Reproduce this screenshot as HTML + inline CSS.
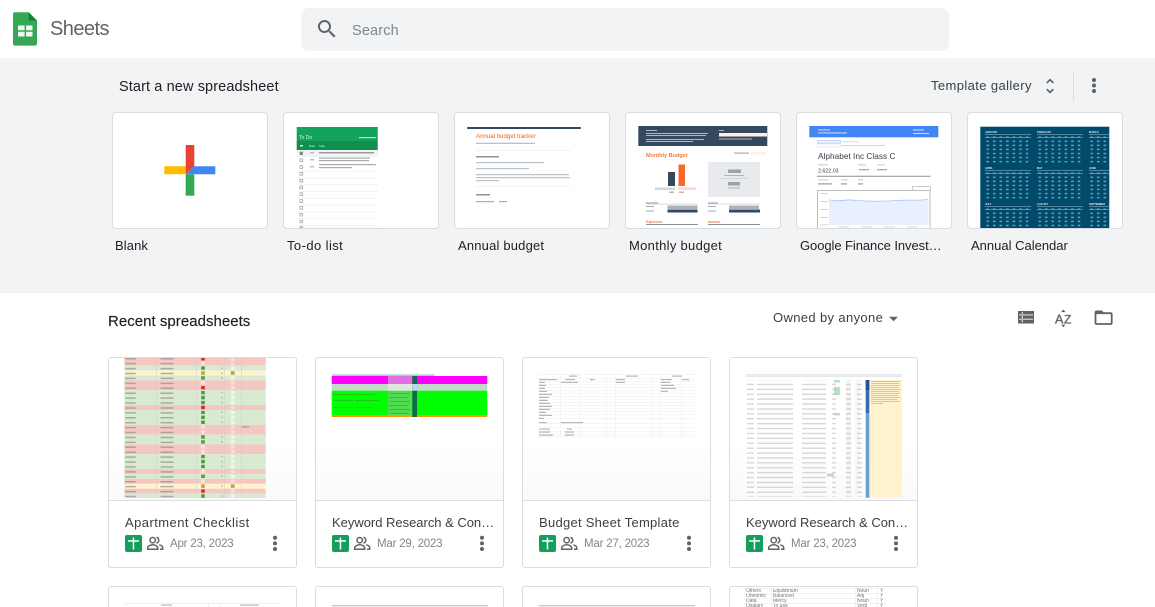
<!DOCTYPE html>
<html><head><meta charset="utf-8"><title>Sheets</title>
<style>
html,body{margin:0;padding:0;background:#fff;width:1155px;height:607px;overflow:hidden}
#root{width:1155px;height:607px;position:relative;overflow:hidden;font-family:"Liberation Sans",sans-serif}
.a{position:absolute;white-space:nowrap}
.tc{position:absolute;top:112px;width:154px;height:115px;background:#fff;border:1px solid #dadce0;border-radius:4px}
.tl{position:absolute;top:237px;font-size:13px;line-height:17px;color:#202124;letter-spacing:.1px;white-space:nowrap}
.c{position:absolute;width:187px;height:209px;background:#fff;border:1px solid #dadce0;border-radius:3px;overflow:hidden}
.c.b{height:20px;border-bottom:none;border-radius:3px 3px 0 0}
.c .fade{position:absolute;left:0;right:0;top:0;height:142px;border-bottom:1px solid #dadce0;background:linear-gradient(#fff 60%,#fafafa)}
.t{position:absolute;top:514px;font-size:13px;line-height:17px;color:#3c4043;white-space:nowrap}
.d{position:absolute;top:537px;font-size:11.5px;line-height:14px;color:#80868b;letter-spacing:-.2px;white-space:nowrap}
svg.top{position:absolute;left:0;top:0;overflow:hidden}
.soft{filter:blur(.3px)}
</style></head><body><div id="root">

<div class="a" style="left:0;top:58px;width:1155px;height:235px;background:#f1f3f4"></div>
<div class="a" style="left:301px;top:8px;width:648px;height:43px;background:#f1f3f4;border-radius:8px"></div>
<div class="a" style="left:50px;top:17px;font-size:20px;line-height:24px;color:#5f6368;letter-spacing:-.55px">Sheets</div>
<div class="a" style="left:352px;top:22px;font-size:14.5px;line-height:18px;color:#80868b;letter-spacing:.15px">Search</div>
<div class="a" style="left:119px;top:78px;font-size:14.5px;line-height:18px;color:#202124;letter-spacing:.11px">Start a new spreadsheet</div>
<div class="a" style="left:931px;top:77px;font-size:13px;line-height:17px;color:#3c4043;letter-spacing:.39px">Template gallery</div>
<div class="a" style="left:1073px;top:72px;width:1px;height:29px;background:#dadce0"></div>

<div class="tc" style="left:112px"></div>
<div class="tc" style="left:283px"></div>
<div class="tc" style="left:454px"></div>
<div class="tc" style="left:625px"></div>
<div class="tc" style="left:796px"></div>
<div class="tc" style="left:967px"></div>
<div class="tl" style="left:115px">Blank</div>
<div class="tl" style="left:287px;letter-spacing:.42px">To-do list</div>
<div class="tl" style="left:458px;letter-spacing:.18px">Annual budget</div>
<div class="tl" style="left:629px;letter-spacing:.3px">Monthly budget</div>
<div class="tl" style="left:800px;letter-spacing:-.07px">Google Finance Invest…</div>
<div class="tl" style="left:971px;letter-spacing:0">Annual Calendar</div>

<div class="a" style="left:108px;top:313px;font-size:15px;line-height:18px;color:#202124;letter-spacing:.03px;-webkit-text-stroke:.15px #202124">Recent spreadsheets</div>
<div class="a" style="left:773px;top:309px;font-size:13px;line-height:17px;color:#3c4043;letter-spacing:.36px">Owned by anyone</div>

<div class="c" style="left:108px;top:357px"><div class="fade"></div></div>
<div class="c" style="left:315px;top:357px"><div class="fade"></div></div>
<div class="c" style="left:522px;top:357px"><div class="fade"></div></div>
<div class="c" style="left:729px;top:357px"><div class="fade"></div></div>
<div class="c b" style="left:108px;top:586px"></div>
<div class="c b" style="left:315px;top:586px"></div>
<div class="c b" style="left:522px;top:586px"></div>
<div class="c b" style="left:729px;top:586px"></div>

<div class="t" style="left:125px;letter-spacing:.44px">Apartment Checklist</div>
<div class="t" style="left:332px;letter-spacing:-.02px">Keyword Research &amp; Con…</div>
<div class="t" style="left:539px;letter-spacing:.27px">Budget Sheet Template</div>
<div class="t" style="left:746px;letter-spacing:-.02px">Keyword Research &amp; Con…</div>
<div class="d" style="left:170px">Apr 23, 2023</div>
<div class="d" style="left:377px">Mar 29, 2023</div>
<div class="d" style="left:584px">Mar 27, 2023</div>
<div class="d" style="left:791px">Mar 23, 2023</div>

<svg class="top" width="1155" height="607" viewBox="0 0 1155 607" font-family="Liberation Sans, sans-serif">
<defs>
<g id="meta">
<rect x="0" y="0" width="17" height="17" rx="2" fill="#12a05c"/>
<rect x="3" y="5.200" width="11" height="1.500" fill="#fff"/><rect x="7.700" y="2.500" width="1.500" height="12" fill="#fff"/>
<g fill="none" stroke="#5f6368" stroke-width="1.500">
<circle cx="27.700" cy="5.200" r="2.700"/>
<path d="M22.700 14.300v-1.500c0-1.800 3-3 5-3s5 1.200 5 3v1.500z"/>
<path d="M31.500 2.400a3 3 0 0 1 0 5.800"/>
<path d="M34.300 9.800c2 .5 3.400 1.500 3.400 3v1.500h-2.700"/>
</g>
<circle cx="150" cy="2.800" r="2" fill="#5f6368"/><circle cx="150" cy="8.400" r="2" fill="#5f6368"/><circle cx="150" cy="14" r="2" fill="#5f6368"/>
</g>
<pattern id="cal" width="6.550" height="4.070" patternUnits="userSpaceOnUse"><rect x="1.400" y=".9" width="2.600" height="1.500" fill="#cfdde5" opacity=".55"/></pattern>
<pattern id="txt" width="41" height="4.900" patternUnits="userSpaceOnUse"><rect x="0" y="1.600" width="41" height="1.300" fill="#aaa" opacity=".5"/></pattern>
<g id="calblock">
<rect x="0" y="2.800" width="46" height=".5" fill="#a8c2cf"/><rect x="0" y="6" width="46" height=".5" fill="#a8c2cf"/>
<rect x="0" y="3.600" width="46" height="2.200" fill="url(#cal)"/>
<rect x="0" y="8" width="46" height="24" fill="url(#cal)"/>
</g>
</defs>

<!-- logo -->
<path fill="#34a853" d="M15 12.300h13.700l8.300 8.300v23a2 2 0 0 1-2 2H15a2 2 0 0 1-2-2V14.300a2 2 0 0 1 2-2z"/>
<path fill="#188038" d="M28.700 12.300 37 20.600h-8.300z"/>
<path fill="#f1f8f3" d="M18 25.500h14.500v11H18z"/>
<path fill="#34a853" d="M24.600 25.500h1.500v11h-1.500zM18 30.300h14.500v1.500H18z"/>
<!-- search -->
<path transform="translate(315,17)" fill="#5f6368" d="M15.500 14h-.79l-.28-.27C15.410 12.590 16 11.110 16 9.500 16 5.910 13.090 3 9.500 3S3 5.910 3 9.500 5.910 16 9.500 16c1.610 0 3.090-.59 4.230-1.570l.27.28v.79l5 4.990L20.490 19l-4.990-5zm-6 0C7.010 14 5 11.990 5 9.500S7.010 5 9.500 5 14 7.010 14 9.500 11.990 14 9.500 14z"/>
<!-- unfold -->
<path transform="translate(1040,76) scale(.84)" fill="#5f6368" d="M12 5.830L15.170 9l1.410-1.410L12 3 7.410 7.590 8.830 9 12 5.830zm0 12.340L8.830 15l-1.410 1.410L12 21l4.590-4.590L15.170 15 12 18.170z"/>
<circle cx="1094" cy="80" r="2" fill="#5f6368"/><circle cx="1094" cy="85.500" r="2" fill="#5f6368"/><circle cx="1094" cy="91" r="2" fill="#5f6368"/>
<!-- caret -->
<path fill="#5f6368" d="M889 316.800h9l-4.500 4.500z"/>
<!-- list icon -->
<path fill="#5f6368" d="M1018 311h16v12.500h-16z"/>
<path fill="#fff" d="M1019 314.500h14v.9h-14zM1019 318.700h14v.9h-14zM1021.800 312v10.500h.9V312z"/>
<!-- AZ icon -->
<text x="1055" y="323.500" font-size="12.500" fill="#5f6368" stroke="#5f6368" stroke-width=".35">A</text>
<text x="1064" y="323.500" font-size="12" fill="#5f6368" stroke="#5f6368" stroke-width=".35">Z</text>
<path fill="#5f6368" d="M1063.300 309.500l2.200 2.600h-4.400zM1063.300 327.300l-2.200-2.600h4.400z"/>
<!-- folder -->
<path transform="translate(1092.800,306.900) scale(.9)" fill="#5f6368" d="M20 6h-8l-2-2H4c-1.100 0-2 .9-2 2v12c0 1.100.9 2 2 2h16c1.100 0 2-.9 2-2V8c0-1.100-.9-2-2-2zm0 12H4V8h16v10z"/>

<!-- blank plus -->
<path fill="#ffbc00" d="M164.300 166.300h21.400v8h-21.400z"/>
<path fill="#ea4335" d="M185.700 145h8.600v21.300l-8.600 8z"/>
<path fill="#4285f4" d="M194.300 166.300h21v8h-29.600z"/>
<path fill="#34a853" d="M185.700 174.300h8.600v21.400h-8.600z"/>

<g class="soft">
<!-- to-do -->
<rect x="296.700" y="127" width="81" height="14" fill="#12a35c"/>
<rect x="296.700" y="141" width="81" height="9" fill="#0e8f4f"/>
<text x="299" y="139" font-size="5" fill="#d8efe2">To Do</text>
<rect x="359" y="137" width="17" height="1.200" fill="#b8e3cc"/>
<rect x="300" y="145" width="3" height="1.500" fill="#e0f2e8"/><text x="309" y="147" font-size="2.800" fill="#e0f2e8">Date</text><text x="319" y="147" font-size="2.800" fill="#e0f2e8">Task</text>
<rect x="296.700" y="150" width="81" height="7" fill="#f1f3f4"/>
<rect x="319" y="152" width="55" height="1.400" fill="#999"/>
<rect x="319" y="157.500" width="51" height="1.200" fill="#aaa"/><rect x="319" y="160" width="50" height="1.200" fill="#aaa"/>
<rect x="319" y="164" width="57" height="1.200" fill="#aaa"/><rect x="319" y="167" width="33" height="1.200" fill="#aaa"/>
<rect x="310" y="152" width="4" height="1.400" fill="#bbb"/><rect x="310" y="159" width="4" height="1.400" fill="#bbb"/><rect x="310" y="166" width="4" height="1.400" fill="#bbb"/>
<g fill="none" stroke="#999" stroke-width=".7">
<rect x="300" y="152" width="2.700" height="2.700" fill="#777"/><rect x="300" y="158.900" width="2.700" height="2.700"/><rect x="300" y="165.700" width="2.700" height="2.700"/><rect x="300" y="172.500" width="2.700" height="2.700"/><rect x="300" y="179.300" width="2.700" height="2.700"/><rect x="300" y="186.100" width="2.700" height="2.700"/><rect x="300" y="192.900" width="2.700" height="2.700"/><rect x="300" y="199.700" width="2.700" height="2.700"/><rect x="300" y="206.500" width="2.700" height="2.700"/><rect x="300" y="213.300" width="2.700" height="2.700"/><rect x="300" y="220.100" width="2.700" height="2.700"/><rect x="300" y="226" width="2.700" height="1.500"/>
</g>
<g fill="#eceff1"><rect x="297" y="170.800" width="81" height=".7"/><rect x="297" y="177.600" width="81" height=".7"/><rect x="297" y="184.400" width="81" height=".7"/><rect x="297" y="191.200" width="81" height=".7"/><rect x="297" y="198" width="81" height=".7"/><rect x="297" y="204.800" width="81" height=".7"/><rect x="297" y="211.600" width="81" height=".7"/><rect x="297" y="218.400" width="81" height=".7"/><rect x="297" y="225.200" width="81" height=".7"/></g>

<!-- annual budget -->
<rect x="467.300" y="127" width="113.500" height="2" fill="#35495e"/>
<text x="476" y="138" font-size="6.100" fill="#f4793b" stroke="#f4793b" stroke-width=".1">Annual budget tracker</text>
<rect x="476" y="142.700" width="59" height="1.300" fill="#bbc1c7"/>
<rect x="476" y="150" width="95" height=".6" fill="#e8eaed"/>
<rect x="476" y="156" width="23" height="1.500" fill="#8b95a0"/>
<rect x="476" y="162" width="68" height="1.200" fill="#bbc1c7"/>
<rect x="476" y="168" width="53" height="1.200" fill="#bbc1c7"/>
<rect x="476" y="174" width="93" height="1.200" fill="#bbc1c7"/>
<rect x="476" y="177" width="94" height="1.200" fill="#bbc1c7"/>
<rect x="476" y="180" width="23" height="1.200" fill="#bbc1c7"/>
<rect x="476" y="186" width="95" height=".8" fill="#eceef0"/>
<rect x="476" y="194" width="14" height="1.500" fill="#8b95a0"/>
<rect x="476" y="201" width="18" height="1.200" fill="#a5adb5"/><rect x="499" y="201" width="8" height="1.200" fill="#a5adb5"/>

<!-- monthly budget -->
<rect x="638.300" y="126" width="129" height="20" fill="#35495e"/>
<rect x="646" y="130" width="11" height="1" fill="#aeb8c2"/>
<rect x="646" y="133" width="62" height="1" fill="#aeb8c2"/><rect x="646" y="135" width="60" height="1" fill="#aeb8c2"/><rect x="646" y="139" width="58" height="1" fill="#aeb8c2"/><rect x="646" y="141" width="47" height="1" fill="#aeb8c2"/>
<rect x="719" y="130" width="5" height="1" fill="#aeb8c2"/>
<rect x="719" y="133" width="48" height="3.500" fill="#fdeee6"/>
<rect x="719" y="138.500" width="33" height="1" fill="#aeb8c2"/>
<text x="646" y="157" font-size="5.500" font-weight="bold" fill="#f4793b">Monthly Budget</text>
<rect x="734" y="152.500" width="15" height="1.200" fill="#a5adb5"/><rect x="751" y="152" width="15" height="2.500" fill="#fdeee6"/>
<rect x="668" y="172" width="7" height="14" fill="#35495e"/>
<rect x="678.500" y="164.500" width="6.500" height="21.500" fill="#f9672a"/>
<rect x="655" y="187.500" width="20" height="2.500" fill="#d3d7db"/><rect x="678" y="187.500" width="18" height="2.500" fill="#fcd9c8"/>
<rect x="669" y="191.700" width="5" height="1" fill="#8c96a0"/><rect x="679" y="191.700" width="5" height="1" fill="#f4793b"/>
<rect x="708" y="162" width="52" height="35" fill="#e8eaed"/>
<rect x="728" y="169.500" width="13" height="3.500" fill="#9aa3ac"/><rect x="724" y="175" width="20" height=".9" fill="#a5adb5"/><rect x="719" y="178" width="30" height=".6" fill="#c6cace"/>
<rect x="728" y="182" width="12" height="3.500" fill="#9aa3ac"/><rect x="728" y="187.500" width="12" height=".9" fill="#a5adb5"/>
<rect x="646" y="202.500" width="12" height="1" fill="#8c96a0"/><rect x="646" y="206" width="8" height="1" fill="#a5adb5"/><rect x="646" y="210.500" width="8" height="1" fill="#a5adb5"/>
<rect x="646" y="203.800" width="52" height=".5" fill="#bbb"/>
<rect x="667.500" y="205.500" width="30" height="3.500" fill="#aab3bc"/><rect x="667.500" y="209.500" width="30" height="3" fill="#35495e"/>
<rect x="708" y="202.500" width="10" height="1" fill="#8c96a0"/><rect x="708" y="206" width="8" height="1" fill="#a5adb5"/><rect x="708" y="210.500" width="8" height="1" fill="#a5adb5"/>
<rect x="708" y="203.800" width="52" height=".5" fill="#bbb"/>
<rect x="729" y="205.500" width="30" height="3.500" fill="#aab3bc"/><rect x="729" y="209.500" width="31" height="3" fill="#35495e"/>
<text x="646" y="223" font-size="3.500" font-weight="bold" fill="#f4793b">Expenses</text><text x="708" y="223" font-size="3.500" font-weight="bold" fill="#f4793b">Income</text>
<rect x="646" y="224" width="52" height=".6" fill="#35495e"/><rect x="708" y="224" width="52" height=".6" fill="#35495e"/>

<!-- finance -->
<rect x="809.300" y="126" width="129" height="11.300" fill="#4285f4"/>
<rect x="818" y="129.500" width="12" height=".9" fill="#dbe7fd"/><rect x="818" y="132.500" width="29" height=".9" fill="#dbe7fd"/><rect x="913" y="129.500" width="11" height=".9" fill="#dbe7fd"/><rect x="913" y="133" width="16" height=".9" fill="#dbe7fd"/>
<rect x="817.500" y="140.500" width="23" height="3" fill="#e8f0fe" stroke="#a8c4f8" stroke-width=".6"/><rect x="817.500" y="144" width="23" height="3" fill="#fff" stroke="#d3e0f8" stroke-width=".6"/>
<rect x="842" y="141.500" width="17" height=".8" fill="#ccc"/><rect x="842" y="145" width="43" height=".8" fill="#ccc"/>
<text x="818" y="159" font-size="8.300" fill="#3c4043">Alphabet Inc Class C</text>
<rect x="818" y="164.500" width="10" height=".8" fill="#bbb"/><rect x="858" y="164.500" width="8" height=".8" fill="#bbb"/><rect x="877" y="164.500" width="8" height=".8" fill="#bbb"/>
<text x="818" y="172.300" font-size="5.300" fill="#3c4043">2,622.03</text>
<rect x="859" y="169" width="10" height="1.300" fill="#7cc4a0"/><rect x="877" y="169" width="10" height="1.300" fill="#7cc4a0"/>
<rect x="817" y="175.700" width="113.500" height="1.300" fill="#aaa"/>
<rect x="818" y="179.500" width="10" height=".8" fill="#bbb"/><rect x="841" y="179.500" width="7" height=".8" fill="#bbb"/><rect x="858" y="179.500" width="5" height=".8" fill="#bbb"/>
<rect x="818" y="183.300" width="14" height="1.200" fill="#999"/><rect x="841" y="183.300" width="6" height="1.200" fill="#999"/><rect x="858" y="183.300" width="5" height="1.200" fill="#999"/>
<rect x="912.500" y="186.500" width="18" height="4" fill="#fff" stroke="#aaa" stroke-width=".6"/>
<path fill="#fff" stroke="#bdbdbd" stroke-width="1" d="M817.500 228v-37.500h112.500V228"/>
<path fill="#e8f0fe" d="M829 200l10 .8 10-1 10 .8 15 .7 15-.4 15-.8 15 .1 9.500-.8V225H829z"/>
<path fill="none" stroke="#a9c5f5" stroke-width=".8" d="M829 200l10 .8 10-1 10 .8 15 .7 15-.4 15-.8 15 .1 9.500-.8"/>
<g fill="#ccc"><rect x="820" y="193" width="8" height=".8"/><rect x="820" y="201" width="8" height=".8"/><rect x="820" y="209" width="8" height=".8"/><rect x="820" y="217" width="8" height=".8"/><rect x="820" y="224.500" width="8" height=".8"/><rect x="838" y="226.500" width="11" height=".8"/><rect x="861" y="226.500" width="11" height=".8"/><rect x="884" y="226.500" width="11" height=".8"/><rect x="907" y="226.500" width="11" height=".8"/></g>

<!-- calendar -->
<rect x="980.300" y="126.700" width="129" height="101.300" fill="#004a6b"/>
<svg x="980.300" y="126.700" width="129" height="101.300" viewBox="980.300 126.700 129 101.300" style="overflow:hidden">
<g font-size="2.600" fill="#dfe9ee" font-weight="bold">
<text x="985" y="133">JANUARY</text><text x="1037" y="133">FEBRUARY</text><text x="1089" y="133">MARCH</text>
<text x="985" y="169">APRIL</text><text x="1037" y="169">MAY</text><text x="1089" y="169">JUNE</text>
<text x="985" y="205">JULY</text><text x="1037" y="205">AUGUST</text><text x="1089" y="205">SEPTEMBER</text>
</g>
<use href="#calblock" transform="translate(985,131.500)"/><use href="#calblock" transform="translate(1037,131.500)"/><use href="#calblock" transform="translate(1089,131.500)"/>
<use href="#calblock" transform="translate(985,167.500)"/><use href="#calblock" transform="translate(1037,167.500)"/><use href="#calblock" transform="translate(1089,167.500)"/>
<use href="#calblock" transform="translate(985,203.500)"/><use href="#calblock" transform="translate(1037,203.500)"/><use href="#calblock" transform="translate(1089,203.500)"/>
</svg>

<!-- apartment checklist -->
<g>
<rect x="124.300" y="358" width="141.400" height="7.700" fill="#f4c7c3"/>
<rect x="124.300" y="365.700" width="141.400" height="4.900" fill="#d9ead3"/>
<rect x="124.300" y="370.600" width="141.400" height="4.900" fill="#fff2cc"/>
<rect x="124.300" y="375.500" width="141.400" height="4.900" fill="#d9ead3"/>
<rect x="124.300" y="380.400" width="141.400" height="9.900" fill="#f4c7c3"/>
<rect x="124.300" y="390.300" width="141.400" height="14.700" fill="#d9ead3"/>
<rect x="124.300" y="405" width="141.400" height="5" fill="#f4c7c3"/>
<rect x="124.300" y="410" width="141.400" height="14.700" fill="#d9ead3"/>
<rect x="124.300" y="424.700" width="141.400" height="9.900" fill="#f4c7c3"/>
<rect x="124.300" y="434.600" width="141.400" height="9.800" fill="#d9ead3"/>
<rect x="124.300" y="444.400" width="141.400" height="9.800" fill="#f4c7c3"/>
<rect x="124.300" y="454.200" width="141.400" height="14.800" fill="#d9ead3"/>
<rect x="124.300" y="469" width="141.400" height="4.900" fill="#f4c7c3"/>
<rect x="124.300" y="473.900" width="141.400" height="4.900" fill="#d9ead3"/>
<rect x="124.300" y="478.800" width="141.400" height="5" fill="#f4c7c3"/>
<rect x="124.300" y="483.800" width="141.400" height="4.900" fill="#fff2cc"/>
<rect x="124.300" y="488.700" width="141.400" height="4.900" fill="#f4c7c3"/>
<rect x="124.300" y="493.600" width="141.400" height="4.400" fill="#d9ead3"/>
</g>
<g stroke-dasharray="1.500 3.420" fill="none" stroke="#8f9488" stroke-opacity=".7">
<path d="M130.500 358V498" stroke-width="10.500"/>
<path d="M167 358V498" stroke-width="13"/>
</g>
<g fill="#d4c9c4" opacity=".8"><rect x="196" y="358" width=".6" height="140"/><rect x="224" y="358" width=".6" height="140"/><rect x="241" y="358" width=".6" height="140"/><rect x="156" y="358" width=".6" height="140"/></g>
<g stroke-width="3.600" fill="none" stroke-dasharray="3.400 1.520">
<path stroke="#4e9a44" d="M203 366.400v4M203 376.200v4M203 391v14M203 410.700v14M203 435.300v9M203 454.900v14M203 474.600v4M203 494.300v3.700"/>
<path stroke="#fbe3e1" d="M203 361.500v4M203 381.100v4M203 425.400v9M203 445.100v9M203 469.700v4M203 479.500v4"/>
<path stroke="#d82b24" d="M203 358v2.500M203 386v4M203 405.700v4M203 489.400v4"/>
<path stroke="#c0a03c" d="M203 371.300v4M203 484.500v4"/>
<path stroke="#f1f6ee" d="M232.700 366.400v4M232.700 376.200v4M232.700 391v14M232.700 410.700v14M232.700 435.300v9M232.700 454.900v14M232.700 474.600v4M232.700 494.300v3.700"/>
<path stroke="#fbdcda" d="M232.700 358v7M232.700 381.100v9M232.700 405.700v4M232.700 425.400v9M232.700 445.100v9M232.700 469.700v4M232.700 479.500v4M232.700 489.400v4"/>
<path stroke="#c0a03c" d="M232.700 371.300v4M232.700 484.500v4"/>
</g>
<g fill="#8a9a85"><rect x="221.500" y="367.500" width="1" height="1.400"/><rect x="221.500" y="372.400" width="1" height="1.400"/><rect x="221.500" y="377.300" width="1" height="1.400"/><rect x="221.500" y="392" width="1" height="1.400"/><rect x="221.500" y="397" width="1" height="1.400"/><rect x="221.500" y="402" width="1" height="1.400"/><rect x="221.500" y="411.700" width="1" height="1.400"/><rect x="221.500" y="416.700" width="1" height="1.400"/><rect x="221.500" y="421.600" width="1" height="1.400"/><rect x="221.500" y="436.300" width="1" height="1.400"/><rect x="221.500" y="441.200" width="1" height="1.400"/><rect x="221.500" y="456" width="1" height="1.400"/><rect x="221.500" y="461" width="1" height="1.400"/><rect x="221.500" y="465.800" width="1" height="1.400"/><rect x="221.500" y="475.700" width="1" height="1.400"/><rect x="221.500" y="485.500" width="1" height="1.400"/><rect x="221.500" y="495.400" width="1" height="1.400"/></g>
<rect x="242" y="426" width="7" height="1.500" fill="#8f9488" opacity=".6"/>

<!-- keyword 1 -->
<rect x="331.700" y="374.300" width="103" height="1.800" fill="#a9d2d8"/>
<rect x="331.700" y="376" width="155.600" height="8" fill="#ff00ff"/>
<rect x="331.700" y="384" width="155.600" height="6.700" fill="#c0dcc8"/>
<rect x="331.700" y="390.700" width="155.600" height="25" fill="#00ff00"/>
<rect x="331.700" y="415.700" width="155.600" height="1.300" fill="#ff9900"/>
<rect x="388" y="376" width="24.300" height="8" fill="#e070e0"/>
<rect x="388" y="390.700" width="24.300" height="25" fill="#50dc50"/>
<rect x="388" y="384" width="24.300" height="6.700" fill="#dde8da"/>
<rect x="412.300" y="376" width="4.700" height="41" fill="#0f6b47"/>
<rect x="412.300" y="384" width="4.700" height="6.700" fill="#b8dbe6"/>
<g fill="#2aa52a"><rect x="333" y="381" width="20" height=".6" fill="#d000d0"/><rect x="333" y="394" width="20" height=".6"/><rect x="355" y="394" width="20" height=".6"/><rect x="333" y="400" width="20" height=".6"/><rect x="355" y="400" width="24" height=".6"/><rect x="333" y="407" width="20" height=".6"/><rect x="355" y="407" width="18" height=".6"/><rect x="390" y="393" width="20" height=".6"/><rect x="390" y="397" width="18" height=".6"/><rect x="390" y="401" width="20" height=".6"/><rect x="390" y="405" width="18" height=".6"/><rect x="390" y="409" width="20" height=".6"/><rect x="390" y="413" width="18" height=".6"/></g>

<!-- budget sheet -->
<g fill="#eceef0">
<rect x="538.300" y="374.300" width="156.700" height=".6"/><rect x="538.300" y="378" width="156.700" height=".6"/><rect x="538.300" y="381.500" width="156.700" height=".6"/><rect x="538.300" y="384" width="156.700" height=".6"/><rect x="538.300" y="387" width="156.700" height=".6"/><rect x="538.300" y="390" width="156.700" height=".6"/><rect x="538.300" y="393" width="156.700" height=".6"/><rect x="538.300" y="396" width="156.700" height=".6"/><rect x="538.300" y="399" width="156.700" height=".6"/><rect x="538.300" y="402" width="156.700" height=".6"/><rect x="538.300" y="405" width="156.700" height=".6"/><rect x="538.300" y="408" width="156.700" height=".6"/><rect x="538.300" y="411" width="156.700" height=".6"/><rect x="538.300" y="414" width="156.700" height=".6"/><rect x="538.300" y="418" width="156.700" height=".6"/><rect x="538.300" y="423" width="156.700" height=".6"/><rect x="538.300" y="427" width="156.700" height=".6"/><rect x="538.300" y="431" width="156.700" height=".6"/><rect x="538.300" y="434" width="156.700" height=".6"/><rect x="538.300" y="436.500" width="156.700" height=".6"/>
<rect x="560" y="374" width=".6" height="63"/><rect x="579" y="374" width=".6" height="63"/><rect x="606" y="374" width=".6" height="63"/><rect x="615" y="374" width=".6" height="63"/><rect x="651" y="374" width=".6" height="63"/><rect x="660" y="374" width=".6" height="63"/><rect x="681" y="374" width=".6" height="63"/>
</g>
<g fill="#b4b8bc">
<rect x="569" y="375.500" width="8" height="1.200"/><rect x="626" y="375.500" width="12" height="1.200"/><rect x="672" y="375.500" width="10" height="1.200"/>
<rect x="539" y="379" width="18" height="1.200"/><rect x="565" y="379" width="10" height="1.200"/><rect x="590" y="379" width="5" height="1.200"/><rect x="616" y="379" width="9" height="1.200"/><rect x="661" y="379" width="11" height="1.200"/><rect x="682" y="379" width="7" height="1.200"/>
<rect x="539" y="381.800" width="6" height="1.200"/><rect x="561" y="381.800" width="17" height="1.200"/><rect x="616" y="381.800" width="9" height="1.200"/><rect x="661" y="381.800" width="9" height="1.200"/>
<rect x="539" y="384.800" width="7" height="1.200"/><rect x="661" y="384.800" width="13" height="1.200"/><rect x="539" y="387.800" width="6" height="1.200"/><rect x="661" y="387.800" width="15" height="1.200"/><rect x="539" y="390.800" width="8" height="1.200"/><rect x="661" y="390.800" width="7" height="1.200"/>
<rect x="539" y="393.800" width="13" height="1.200"/><rect x="539" y="396.800" width="10" height="1.200"/><rect x="539" y="399.800" width="9" height="1.200"/><rect x="539" y="402.800" width="11" height="1.200"/><rect x="539" y="405.800" width="13" height="1.200"/><rect x="539" y="408.800" width="11" height="1.200"/><rect x="539" y="411.800" width="7" height="1.200"/><rect x="539" y="414.800" width="13" height="1.200"/><rect x="539" y="417.800" width="5" height="1.200"/>
<rect x="539" y="422" width="8" height="1.200"/><rect x="561" y="422" width="22" height="1.200"/>
<rect x="539" y="428.500" width="11" height="1.200"/><rect x="567" y="428.500" width="5" height="1.200"/><rect x="539" y="431.500" width="11" height="1.200"/><rect x="565" y="431.500" width="9" height="1.200"/><rect x="539" y="434.500" width="14" height="1.200"/><rect x="565" y="434.500" width="9" height="1.200"/>
</g>

<!-- keyword 2 -->
<rect x="869.300" y="380" width="32.700" height="117.700" fill="#fff2cc"/>
<rect x="865.700" y="380" width="3.600" height="33" fill="#2f6fb0"/>
<rect x="865.700" y="380" width="3.600" height="10" fill="#1e55a0"/>
<rect x="865.700" y="413" width="3.600" height="84.700" fill="#6b9fcf"/>
<rect x="834" y="380" width="6" height="2.500" fill="#b7e1c5"/><rect x="834" y="387" width="6" height="8" fill="#b7e1c5"/><rect x="834" y="413" width="6" height="2.500" fill="#b7e1c5"/>
<rect x="827" y="473.500" width="7" height="3" fill="#b7e1c5"/>
<rect x="846" y="380" width="5" height="117" fill="#f5f5f5"/><rect x="855" y="380" width="5" height="117" fill="#f7f7f7"/>
<rect x="746" y="374" width="156" height=".7" fill="#ddd"/><rect x="746" y="375.500" width="156" height="1.200" fill="#ddd"/>
<rect x="747" y="380" width="7" height="117" fill="url(#txt)"/>
<rect x="757" y="380" width="36" height="117" fill="url(#txt)"/>
<rect x="802" y="380" width="24" height="117" fill="url(#txt)"/>
<rect x="832" y="380" width="4" height="117" fill="url(#txt)"/><rect x="846" y="380" width="5" height="117" fill="url(#txt)"/>
<rect x="857" y="380" width="5" height="117" fill="url(#txt)"/>
<g fill="#c9b47a" opacity=".75"><rect x="871" y="381" width="29" height=".9"/><rect x="871" y="383" width="28" height=".9"/><rect x="871" y="385" width="29" height=".9"/><rect x="871" y="387" width="27" height=".9"/><rect x="871" y="389" width="29" height=".9"/><rect x="871" y="391" width="28" height=".9"/><rect x="871" y="393" width="29" height=".9"/><rect x="871" y="395" width="27" height=".9"/><rect x="871" y="397" width="29" height=".9"/><rect x="871" y="399" width="26" height=".9"/><rect x="871" y="401" width="29" height=".9"/><rect x="871" y="403" width="12" height=".9"/></g>

<!-- bottom row -->
<g fill="#e4e6e8"><rect x="124" y="603" width="156" height=".6"/><rect x="208" y="603" width=".6" height="4"/><rect x="220" y="603" width=".6" height="4"/></g>
<g fill="#b4b8bc"><rect x="161" y="604.500" width="11" height="1.200"/><rect x="240" y="604.500" width="19" height="1.200"/></g>
<rect x="332" y="605" width="156" height="1.300" fill="#c4c7ca"/>
<rect x="539" y="605" width="156" height="1.300" fill="#c4c7ca"/>
<g font-size="5" fill="#70757a">
<text x="746" y="592">Others</text><text x="773" y="592">Equilibrium</text><text x="857" y="592">Noun</text><text x="880" y="592">Y</text>
<text x="746" y="597">Ohnomic</text><text x="773" y="597">Balanced</text><text x="857" y="597">Adj</text><text x="880" y="597">Y</text>
<text x="746" y="602">Data</text><text x="773" y="602">Mercy</text><text x="857" y="602">Noun</text><text x="880" y="602">Y</text>
<text x="746" y="606.800">Oxalary</text><text x="773" y="606.800">To use</text><text x="857" y="606.800">Verb</text><text x="880" y="606.800">Y</text>
</g>
<g fill="#e8eaed"><rect x="744" y="588" width="142" height=".6"/><rect x="744" y="593" width="142" height=".6"/><rect x="744" y="598" width="142" height=".6"/><rect x="744" y="603" width="142" height=".6"/><rect x="771" y="587" width=".6" height="20"/><rect x="855" y="587" width=".6" height="20"/><rect x="877" y="587" width=".6" height="20"/></g>
</g>

<!-- meta rows -->
<use href="#meta" transform="translate(125,535)"/>
<use href="#meta" transform="translate(332,535)"/>
<use href="#meta" transform="translate(539,535)"/>
<use href="#meta" transform="translate(746,535)"/>
</svg>
</div></body></html>
